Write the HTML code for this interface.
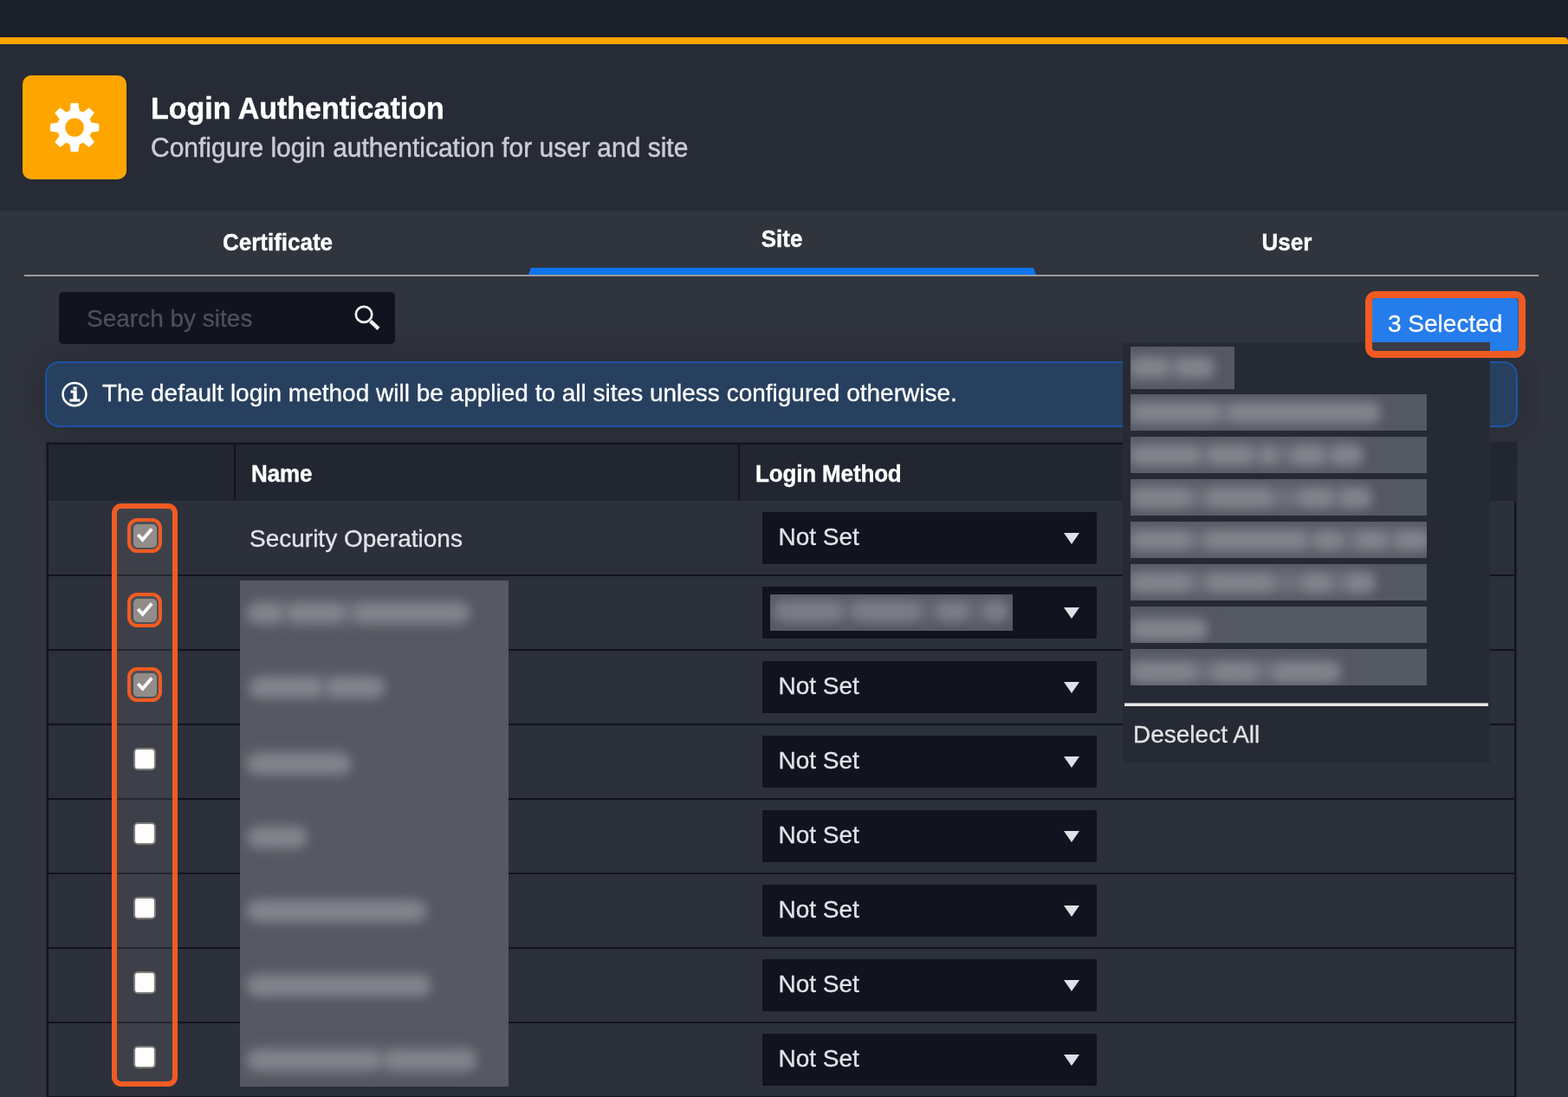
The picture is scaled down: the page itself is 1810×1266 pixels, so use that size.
<!DOCTYPE html>
<html lang="en"><head><meta charset="utf-8"><title>Login Authentication</title>
<style>
*{box-sizing:border-box;margin:0;padding:0}
html,body{width:1810px;height:1266px;overflow:hidden;background:#30343d}
#root{position:absolute;left:0;top:0;width:1810px;height:1266px;overflow:hidden;will-change:transform}
body{position:relative;font-family:"Liberation Sans",sans-serif;color:#fff}
.abs{position:absolute}
.t{position:absolute;white-space:nowrap;line-height:1}
#topbar{left:0;top:0;width:1810px;height:43px;background:#1c202a}
#oline{left:0;top:43px;width:1810px;height:8px;background:#ffa500;border-top-right-radius:5px}
#header{left:0;top:51px;width:1810px;height:191.5px;background:#272b35}
#icon{left:26px;top:87px;width:120px;height:120px;background:#ffa500;border-radius:10px}
#title{left:174px;top:108px;font-size:34px;font-weight:bold;color:#fff;-webkit-text-stroke:.4px #fff;transform:scaleY(1.05);transform-origin:0 86%}
#sub{left:174px;top:156px;font-size:30px;color:#c9cdd8;-webkit-text-stroke:.45px #c9cdd8;transform:scaleY(1.055);transform-origin:0 86%}
.tab{position:absolute;top:242px;height:75px;width:583px;text-align:center;font-size:26px;font-weight:bold;color:#fff;line-height:1}
.tab span{display:inline-block;-webkit-text-stroke:.35px #fff;transform:scaleY(1.04);transform-origin:50% 80%}
#tabline{left:28px;top:317px;width:1748px;height:2px;background:#9b9b9b}
#tabactive{left:610px;top:309px;width:586px;height:0;border-bottom:8px solid #0f74ee;border-left:3px solid transparent;border-right:3px solid transparent}
#search{left:68px;top:337px;width:388px;height:60px;background:#11141e;border-radius:5px}
#searchtxt{left:100px;top:354px;font-size:28px;color:#4b505d;-webkit-text-stroke:.3px #4b505d}
#clip{left:28px;top:385px;width:1748px;height:900px;overflow:hidden}
#shadowbox{left:24px;top:32px;width:1700px;height:76px;box-shadow:0 0 46px 0 rgba(0,0,0,.24);border-radius:16px}
#banner{left:52px;top:417px;width:1700px;height:76px;background:#28405f;border:2px solid #1d53a6;border-radius:16px}
#bannertxt{left:118px;top:440px;font-size:28px;color:#fff;-webkit-text-stroke:.3px #fff}
#halo{left:52px;top:509px;width:1700px;height:760px;background:#262a35}
#tbl{left:54px;top:511px;width:1696px;height:760px;background:#11141e}
#thead{left:56px;top:513px;width:1694px;height:65.5px;background:#222630}
#theadr{left:1700px;top:511px;width:50px;height:67px;background:#222630}
.coldiv{position:absolute;top:513px;width:2px;height:64px;background:#11141e}
.th{position:absolute;top:534px;font-size:26px;font-weight:bold;color:#fff;letter-spacing:-.15px;-webkit-text-stroke:.35px #fff;line-height:1;white-space:nowrap;transform:scaleY(1.03);transform-origin:0 80%}
.row{position:absolute;left:56px;width:1692px;background:#2b303a}
.sel{position:absolute;left:880px;width:386px;height:60px;background:#11141e;border-radius:1.5px}
.sel .v{position:absolute;left:18.5px;top:15px;font-size:28px;color:#e1e4ea;-webkit-text-stroke:.3px #e1e4ea;line-height:1;white-space:nowrap}
.sel .ar{position:absolute;left:347.5px;top:23.6px;width:0;height:0;border-left:9.2px solid transparent;border-right:9.2px solid transparent;border-top:13.2px solid #dfe1e6}
.cb{position:absolute;left:154px;width:26px;height:26px;border-radius:5px;background:#fffdfb;border:2px solid #7d7b79}
.cbc{position:absolute;left:153.5px;width:27.2px;height:27.2px;border-radius:5px;background:#928d89}
.cbo{position:absolute;left:147px;width:40.4px;height:40.4px;border-radius:11.5px;border:4.2px solid #f15b22;background:rgba(255,238,228,.085)}
#colhl{left:129px;top:581px;width:76.3px;height:673px;border:6px solid #f15b22;border-radius:11px;background:rgba(255,238,228,.09)}
#btnhl{left:1576px;top:336px;width:185px;height:77px;border:8px solid #f15b22;border-radius:12px;background:rgba(255,238,228,.09)}
#btn{left:1584px;top:344px;width:169px;height:61.5px;background:#1072ec;border-radius:5px;border:1px solid #1a4f9c;border-left-color:#1072ec;border-top-color:#1072ec}
#btntxt{left:1602px;top:360px;font-size:28px;color:#fff;-webkit-text-stroke:.3px #fff}
#dd{left:1296px;top:395px;width:424px;height:486px;background:#262a35;border:1px solid #282c37}
#ddline{left:1298px;top:811px;width:420px;height:4px;background:#e8e8e8;border-top:1px solid #9a9a9a}
#ddtxt{left:1308px;top:834px;font-size:28px;color:#e2e2e2;-webkit-text-stroke:.3px #e2e2e2}
.bar{position:absolute;background:#545861;overflow:hidden}
.bl{position:absolute;filter:blur(6px);background:rgba(140,143,151,.62);border-radius:10px;height:21px}
.ws{position:absolute;filter:blur(8px);background:#70737c;border-radius:10px;height:26px}
#nameblur{left:277px;top:670px;width:310px;height:584px;background:#565962}
</style></head>
<body>
<div id="root">
<div class="abs" id="topbar"></div><div class="abs" id="oline"></div><div class="abs" id="header"></div>
<div class="abs" id="icon"><svg width="120" height="120" viewBox="0 0 120 120"><path transform="translate(60.1,60.1)" fill="#fff" fill-rule="evenodd" stroke="#fff" stroke-width="0.8" stroke-linejoin="round" d="M-5.30 -18.97L-3.95 -27.75 L3.95 -27.75 L5.30 -18.97A19.70 19.70 0 0 1 9.67 -17.16L16.83 -22.42 L22.42 -16.83 L17.16 -9.67A19.70 19.70 0 0 1 18.97 -5.30L27.75 -3.95 L27.75 3.95 L18.97 5.30A19.70 19.70 0 0 1 17.16 9.67L22.42 16.83 L16.83 22.42 L9.67 17.16A19.70 19.70 0 0 1 5.30 18.97L3.95 27.75 L-3.95 27.75 L-5.30 18.97A19.70 19.70 0 0 1 -9.67 17.16L-16.83 22.42 L-22.42 16.83 L-17.16 9.67A19.70 19.70 0 0 1 -18.97 5.30L-27.75 3.95 L-27.75 -3.95 L-18.97 -5.30A19.70 19.70 0 0 1 -17.16 -9.67L-22.42 -16.83 L-16.83 -22.42 L-9.67 -17.16A19.70 19.70 0 0 1 -5.30 -18.97 Z M11.2 0 A11.2 11.2 0 1 0 -11.2 0 A11.2 11.2 0 1 0 11.2 0 Z"/></svg></div>
<div class="t" id="title">Login Authentication</div>
<div class="t" id="sub">Configure login authentication for user and site</div>
<div class="tab" style="left:29px;padding-top:25px"><span>Certificate</span></div>
<div class="tab" style="left:611px;padding-top:21px"><span>Site</span></div>
<div class="tab" style="left:1194px;padding-top:25px"><span>User</span></div>
<div class="abs" id="tabline"></div><div class="abs" id="tabactive"></div>
<div class="abs" id="search"></div><div class="t" id="searchtxt">Search by sites</div>
<svg class="abs" style="left:400px;top:345px" width="48" height="48" viewBox="0 0 48 48"><ellipse cx="20.05" cy="17.9" rx="9.2" ry="8.95" fill="none" stroke="#f2f2f2" stroke-width="2.7"/><path d="M27.6 25.6 L37.0 34.3" stroke="#f2f2f2" stroke-width="4.3" stroke-linecap="butt"/></svg>
<div class="abs" id="clip"><div class="abs" id="shadowbox"></div></div>
<div class="abs" id="banner"></div>
<svg class="abs" style="left:66px;top:435px" width="40" height="40" viewBox="0 0 40 40"><ellipse cx="20" cy="20.05" rx="13.45" ry="13.05" fill="none" stroke="#fff" stroke-width="2.6"/><text x="20.1" y="28.1" text-anchor="middle" font-family="Liberation Mono,monospace" font-weight="bold" font-size="21.5" fill="#fff" stroke="#fff" stroke-width="1.1" stroke-linejoin="miter">i</text></svg>
<div class="t" id="bannertxt">The default login method will be applied to all sites unless configured otherwise.</div>
<div class="abs" id="halo"></div><div class="abs" id="tbl"></div><div class="abs" id="thead"></div><div class="abs" id="theadr"></div>
<div class="coldiv" style="left:270px"></div><div class="coldiv" style="left:852px"></div>
<div class="th" style="left:290px">Name</div><div class="th" style="left:872px">Login Method</div>
<div class="row" style="top:578px;height:85px"></div>
<div class="row" style="top:665px;height:84px"></div>
<div class="row" style="top:751px;height:84px"></div>
<div class="row" style="top:837px;height:84px"></div>
<div class="row" style="top:923px;height:84px"></div>
<div class="row" style="top:1009px;height:84px"></div>
<div class="row" style="top:1095px;height:84px"></div>
<div class="row" style="top:1181px;height:84px"></div>
<div class="t" style="left:288px;top:608px;font-size:28px;color:#e1e4ea;-webkit-text-stroke:.3px #e1e4ea">Security Operations</div>
<div class="sel" style="top:591px"><div class="v">Not Set</div><div class="ar"></div></div>
<div class="sel" style="top:677px"><div class="bar" style="left:9px;top:9px;width:280px;height:42px;background:#555762"><div class="ws" style="left:0px;top:5px;width:276px;background:#676975"></div><div class="bl" style="left:6px;top:9px;width:78px;background:#7b7d88"></div><div class="bl" style="left:94px;top:9px;width:80px;background:#7b7d88"></div><div class="bl" style="left:192px;top:9px;width:38px;background:#7b7d88"></div><div class="bl" style="left:246px;top:9px;width:28px;background:#7b7d88"></div></div><div class="ar"></div></div>
<div class="sel" style="top:763px"><div class="v">Not Set</div><div class="ar"></div></div>
<div class="sel" style="top:849px"><div class="v">Not Set</div><div class="ar"></div></div>
<div class="sel" style="top:935px"><div class="v">Not Set</div><div class="ar"></div></div>
<div class="sel" style="top:1021px"><div class="v">Not Set</div><div class="ar"></div></div>
<div class="sel" style="top:1107px"><div class="v">Not Set</div><div class="ar"></div></div>
<div class="sel" style="top:1193px"><div class="v">Not Set</div><div class="ar"></div></div>
<div class="bar" id="nameblur">
<div class="ws" style="left:9px;top:24px;width:255px"></div>
<div class="bl" style="left:9px;top:26.5px;width:40px"></div>
<div class="bl" style="left:56px;top:26.5px;width:64px"></div>
<div class="bl" style="left:132px;top:26.5px;width:132px"></div>
<div class="ws" style="left:12px;top:110px;width:154px"></div>
<div class="bl" style="left:12px;top:112.5px;width:82px"></div>
<div class="bl" style="left:102px;top:112.5px;width:64px"></div>
<div class="ws" style="left:9px;top:198px;width:118px"></div>
<div class="bl" style="left:9px;top:200.5px;width:118px"></div>
<div class="ws" style="left:10px;top:283px;width:66px"></div>
<div class="bl" style="left:10px;top:285.5px;width:66px"></div>
<div class="ws" style="left:9px;top:368px;width:205px"></div>
<div class="bl" style="left:9px;top:370.5px;width:205px"></div>
<div class="ws" style="left:9px;top:454px;width:210px"></div>
<div class="bl" style="left:9px;top:456.5px;width:210px"></div>
<div class="ws" style="left:9px;top:540px;width:263px"></div>
<div class="bl" style="left:9px;top:542.5px;width:152px"></div>
<div class="bl" style="left:168px;top:542.5px;width:104px"></div>
</div>
<div class="abs" id="colhl"></div>
<div class="cbo" style="top:598px"></div>
<div class="cbc" style="top:604.5px"><svg width="28" height="28" viewBox="0 0 28 28" style="position:absolute;left:0;top:0"><path d="M5.3 12.0 L10.6 17.9 L21.2 5.4" fill="none" stroke="#fffdfb" stroke-width="3.9"/></svg></div>
<div class="cbo" style="top:684px"></div>
<div class="cbc" style="top:690.5px"><svg width="28" height="28" viewBox="0 0 28 28" style="position:absolute;left:0;top:0"><path d="M5.3 12.0 L10.6 17.9 L21.2 5.4" fill="none" stroke="#fffdfb" stroke-width="3.9"/></svg></div>
<div class="cbo" style="top:770px"></div>
<div class="cbc" style="top:776.5px"><svg width="28" height="28" viewBox="0 0 28 28" style="position:absolute;left:0;top:0"><path d="M5.3 12.0 L10.6 17.9 L21.2 5.4" fill="none" stroke="#fffdfb" stroke-width="3.9"/></svg></div>
<div class="cb" style="top:863px"></div>
<div class="cb" style="top:949px"></div>
<div class="cb" style="top:1035px"></div>
<div class="cb" style="top:1121px"></div>
<div class="cb" style="top:1207px"></div>
<div class="abs" id="btn"></div><div class="t" id="btntxt">3 Selected</div>
<div class="abs" id="dd"></div>
<div class="bar" style="left:1305px;top:400px;width:120px;height:49px"><div class="ws" style="left:-12px;top:11px;width:108px"></div><div class="bl" style="left:2px;top:13.5px;width:42px"></div><div class="bl" style="left:52px;top:13.5px;width:44px"></div></div>
<div class="bar" style="left:1305px;top:455px;width:342px;height:42px"><div class="ws" style="left:-12px;top:8px;width:300px"></div><div class="bl" style="left:2px;top:10.5px;width:102px"></div><div class="bl" style="left:112px;top:10.5px;width:176px"></div></div>
<div class="bar" style="left:1305px;top:504px;width:342px;height:42px"><div class="ws" style="left:-12px;top:8px;width:280px"></div><div class="bl" style="left:2px;top:10.5px;width:78px"></div><div class="bl" style="left:88px;top:10.5px;width:54px"></div><div class="bl" style="left:150px;top:10.5px;width:18px"></div><div class="bl" style="left:186px;top:10.5px;width:38px"></div><div class="bl" style="left:232px;top:10.5px;width:36px"></div></div>
<div class="bar" style="left:1305px;top:553px;width:342px;height:42px"><div class="ws" style="left:-12px;top:8px;width:290px"></div><div class="bl" style="left:2px;top:10.5px;width:68px"></div><div class="bl" style="left:88px;top:10.5px;width:76px"></div><div class="bl" style="left:194px;top:10.5px;width:40px"></div><div class="bl" style="left:242px;top:10.5px;width:36px"></div></div>
<div class="bar" style="left:1305px;top:602px;width:342px;height:42px"><div class="ws" style="left:-12px;top:8px;width:358px"></div><div class="bl" style="left:2px;top:10.5px;width:68px"></div><div class="bl" style="left:86px;top:10.5px;width:118px"></div><div class="bl" style="left:212px;top:10.5px;width:32px"></div><div class="bl" style="left:260px;top:10.5px;width:36px"></div><div class="bl" style="left:306px;top:10.5px;width:40px"></div></div>
<div class="bar" style="left:1305px;top:651px;width:342px;height:42px"><div class="ws" style="left:-12px;top:8px;width:294px"></div><div class="bl" style="left:2px;top:10.5px;width:68px"></div><div class="bl" style="left:88px;top:10.5px;width:78px"></div><div class="bl" style="left:198px;top:10.5px;width:34px"></div><div class="bl" style="left:248px;top:10.5px;width:34px"></div></div>
<div class="bar" style="left:1305px;top:700px;width:342px;height:42px"><div class="ws" style="left:-12px;top:13px;width:100px"></div><div class="bl" style="left:2px;top:15.5px;width:86px"></div></div>
<div class="bar" style="left:1305px;top:749px;width:342px;height:42px"><div class="ws" style="left:-12px;top:13px;width:254px"></div><div class="bl" style="left:2px;top:15.5px;width:74px"></div><div class="bl" style="left:94px;top:15.5px;width:52px"></div><div class="bl" style="left:164px;top:15.5px;width:78px"></div></div>
<div class="abs" id="ddline"></div><div class="t" id="ddtxt">Deselect All</div>
<div class="abs" id="btnhl"></div>
</div>
</body></html>
